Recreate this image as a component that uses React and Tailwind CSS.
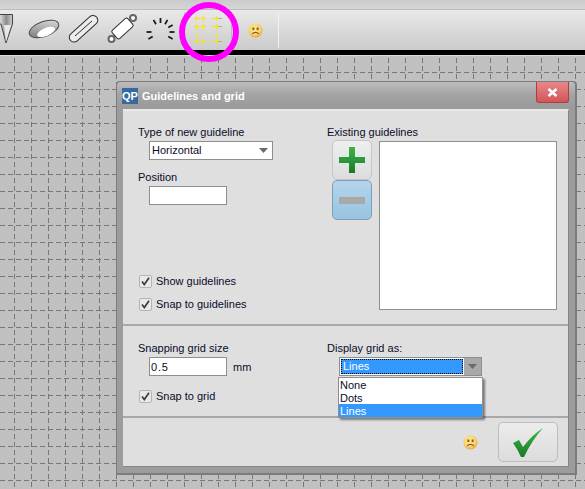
import React from "react";

function Smiley({ id, className }) {
  return (
    <svg className={className} width="15" height="15" viewBox="0 0 15 15">
      <defs>
        <radialGradient id={id} cx="45%" cy="40%" r="60%">
          <stop offset="0%" stopColor="#fdf0a0" />
          <stop offset="65%" stopColor="#f9d56d" />
          <stop offset="100%" stopColor="#eca23f" />
        </radialGradient>
      </defs>
      <circle cx="7.5" cy="7.5" r="7" fill={`url(#${id})`} />
      <rect x="4.4" y="4.5" width="2" height="2.6" fill="#8a5a2a" />
      <rect x="8.6" y="4.5" width="2" height="2.6" fill="#8a5a2a" />
      <path d="M4.2 10.8 Q7.5 8 10.8 10.8" fill="none" stroke="#8a5526" strokeWidth="1.2" />
    </svg>
  );
}

function Check({ label }) {
  return (
    <div className="flex items-center h-[14px]">
      <div className="w-[13px] h-[13px] rounded-[2px] border border-[#b4b4b4] bg-[#e9e9e9] flex items-center justify-center">
        <svg width="11" height="11" viewBox="0 0 11 11">
          <path d="M2 5.5 L4.3 8.5 L9 1.8" fill="none" stroke="#3c3c3c" strokeWidth="1.7" />
        </svg>
      </div>
      <span className="ml-[4px]">{label}</span>
    </div>
  );
}

function Arrow() {
  return (
    <svg width="9" height="5" viewBox="0 0 9 5">
      <path d="M0 0 H9 L4.5 5 Z" fill="#6a6a6a" />
    </svg>
  );
}

function Grid() {
  const xs = [];
  for (let x = 14; x < 585; x += 17) xs.push(x);
  const ys = [];
  for (let y = 16; y < 434; y += 17) ys.push(y);
  return (
    <svg className="absolute inset-0" width="585" height="434">
      {xs.map((x) => (
        <line key={x} x1={x + 0.5} y1="2" x2={x + 0.5} y2="434" stroke="#777777" strokeDasharray="5 3" />
      ))}
      {ys.map((y) => (
        <line key={y} x1="0" y1={y + 0.5} x2="585" y2={y + 0.5} stroke="#777777" strokeDasharray="5 3" />
      ))}
    </svg>
  );
}

const ticks = [-120, -90, -60, -30, 0, 30, 150, 180];

function ToolIcons() {
  return (
    <svg width="290" height="50" viewBox="0 0 290 50" className="absolute left-0 top-0">
      <defs>
        <linearGradient id="steel" x1="0" x2="1" y1="0" y2="0">
          <stop offset="0%" stopColor="#e4e4e4" />
          <stop offset="55%" stopColor="#8c8c8c" />
          <stop offset="100%" stopColor="#d0d0d0" />
        </linearGradient>
        <linearGradient id="dish" x1="0" x2="1" y1="1" y2="0">
          <stop offset="0%" stopColor="#6e6e6e" />
          <stop offset="100%" stopColor="#e6e6e6" />
        </linearGradient>
      </defs>
      <path d="M-1 14.5 H12.5 V24 L6 43 L1 24 H-1 Z" fill="url(#steel)" stroke="#444" />
      <path d="M4 25 L6 42 L11 25 Z" fill="#e8e8e8" stroke="none" />
      <ellipse cx="44" cy="29" rx="15.5" ry="7.5" transform="rotate(-20 44 29)" fill="url(#dish)" stroke="#4a4a4a" />
      <ellipse cx="46" cy="32" rx="9.5" ry="4" transform="rotate(-22 46 32)" fill="#fff" />
      <g fill="none" stroke="#2e2e2e" strokeWidth="1">
        <rect x="66" y="24" width="35" height="9.5" rx="4.7" transform="rotate(-42 83.5 28.7)" fill="#ececec" />
        <path d="M75 36 L92 21" />
      </g>
      <path d="M112.5 38 L132.5 18" stroke="#444" strokeWidth="2" />
      <rect x="112" y="23" width="21" height="11" rx="2" transform="rotate(-42 122.5 28.5)" fill="#fff" stroke="#333" />
      <circle cx="111.5" cy="39" r="3" fill="#fff" strokeWidth="2" stroke="#666" />
      <circle cx="133" cy="18" r="3" fill="#fff" strokeWidth="2" stroke="#666" />
      <g stroke="#1a1a1a" strokeWidth="1.8">
        {ticks.map((a) => {
          const r = (a * Math.PI) / 180;
          return (
            <line
              key={a}
              x1={160.5 + 9 * Math.cos(r)}
              y1={32 + 9 * Math.sin(r)}
              x2={160.5 + 14 * Math.cos(r)}
              y2={32 + 14 * Math.sin(r)}
            />
          );
        })}
      </g>
      <line x1="184.5" y1="12" x2="184.5" y2="50" stroke="#bbbbbb" />
      <line x1="231.5" y1="12" x2="231.5" y2="50" stroke="#bbbbbb" />
      <line x1="278.5" y1="13" x2="278.5" y2="48" stroke="#f2f2f2" />
      <g stroke="#ffe600" strokeWidth="1" fill="none">
        <path d="M196.5 16 V21 M203.5 16 V21 M216.5 16 V21 M196.5 24 V30 M203.5 24 V30 M216.5 24 V30 M196.5 33 V38 M216.5 33 V38 M196.5 39 V44 M203.5 39 V44 M216.5 39 V44" />
        <path d="M194 18.5 H200 M201 18.5 H206 M211 18.5 H218 M194 26.5 H200 M201 26.5 H206 M211 26.5 H218 M194 41.5 H200 M201 41.5 H206 M211 41.5 H218" />
      </g>
      <path d="M218 18.5 H222 M218 26.5 H222 M218 41.5 H222" stroke="#b5b07a" strokeWidth="1" />
    </svg>
  );
}

export default function App() {
  return (
    <div
      className="relative w-[585px] h-[489px] overflow-hidden flex flex-col bg-[#c0c0c0] text-[11px] leading-[14px] text-[#0b0b2a]"
      style={{ fontFamily: '"Liberation Sans", sans-serif' }}
    >
      <header className="relative h-[50px] shrink-0 flex flex-col">
        <div className="h-[10px] shrink-0 bg-gradient-to-b from-[#cbcbcb] to-[#d6d6d6] border-b border-[#bdbdbd]" />
        <div className="flex-1 bg-gradient-to-b from-[#e9e9e9] to-[#cbcbcb]" />
        <ToolIcons />
        <Smiley id="sm1" className="absolute left-[248px] top-[23px]" />
      </header>
      <div className="h-[5px] shrink-0 bg-black" />
      <main className="relative flex-1 border-t border-[#dadada]">
        <Grid />
        <section className="absolute left-[116px] top-[25px] w-[461px] h-[394px] rounded-t-[4px] border border-[#7c7c7c] border-r-[2px] border-b-[2px] flex flex-col bg-[#9c9c9c]">
          <div className="relative h-[27px] shrink-0 rounded-t-[4px] bg-gradient-to-b from-[#bcbcbc] via-[#a2a2a2] to-[#9a9a9a] flex items-center pl-[5px]">
            <div className="w-[16px] h-[16px] bg-[#36699d] text-white font-bold text-[11px] leading-[16px] text-center">QP</div>
            <span className="ml-[4px] text-white font-bold text-[11px]">Guidelines and grid</span>
            <div className="absolute right-[6px] top-0 w-[33px] h-[21px] rounded-b-[3px] border border-[#a94040] border-t-0 bg-gradient-to-b from-[#e8888a] to-[#d25457] flex items-center justify-center">
              <svg width="11" height="9" viewBox="0 0 11 9">
                <path d="M1.5 1 L9.5 8 M9.5 1 L1.5 8" stroke="#fff" strokeWidth="2.6" />
              </svg>
            </div>
          </div>
          <div className="mx-[6px] mb-[6px] flex-1 flex flex-col bg-[#dfdfdf] border-t-2 border-[#e8e8e8] border-r border-r-[#858585] border-b border-b-[#858585]">
            <div className="h-[215px] flex pl-[15px] pt-[14px] border-b-2 border-[#a8a8a8]">
              <div className="w-[189px] flex flex-col">
                <div>Type of new guideline</div>
                <div className="ml-[11px] mt-[2px] w-[124px] h-[19px] bg-white border border-[#8e8e8e] flex items-center justify-between pl-[2px] pr-[4px] pb-[2px]">
                  <span>Horizontal</span>
                  <span className="pt-[2px] flex"><Arrow /></span>
                </div>
                <div className="mt-[10px]">Position</div>
                <div className="ml-[11px] mt-[2px] w-[78px] h-[19px] bg-white border border-[#8e8e8e]" />
                <div className="mt-[69px] ml-[1px]"><Check label="Show guidelines" /></div>
                <div className="mt-[9px] ml-[1px]"><Check label="Snap to guidelines" /></div>
              </div>
              <div className="flex flex-col">
                <div>Existing guidelines</div>
                <div className="flex mt-[1px] ml-[5px]">
                  <div className="flex flex-col">
                    <div className="w-[40px] h-[40px] rounded-[5px] border border-[#c6c6c6] bg-gradient-to-b from-[#efefef] to-[#dcdcdc] flex items-center justify-center">
                      <svg width="26" height="26" viewBox="0 0 26 26">
                        <defs>
                          <linearGradient id="gp" x1="0" x2="0" y1="0" y2="1">
                            <stop offset="0%" stopColor="#3cb64a" />
                            <stop offset="100%" stopColor="#1a7a28" />
                          </linearGradient>
                        </defs>
                        <path d="M10 0 H16 V10 H26 V16 H16 V26 H10 V16 H0 V10 H10 Z" fill="url(#gp)" />
                      </svg>
                    </div>
                    <div className="w-[40px] h-[40px] rounded-[5px] border border-[#7f9db8] bg-gradient-to-b from-[#b4d5ec] to-[#98c4e1] flex items-center justify-center">
                      <div className="w-[26px] h-[7px] bg-[#a9a9a9]" />
                    </div>
                  </div>
                  <div className="ml-[7px] mt-[1px] w-[178px] h-[169px] bg-white border border-[#8e8e8e]" />
                </div>
              </div>
            </div>
            <div className="h-[92px] flex pl-[15px] pt-[15px] border-b-2 border-[#a8a8a8]">
              <div className="w-[189px] flex flex-col">
                <div>Snapping grid size</div>
                <div className="flex items-center ml-[11px] mt-[2px]">
                  <div className="w-[78px] h-[19px] bg-white border border-[#8e8e8e] pl-[1px] flex items-center tracking-[0.8px]">0.5</div>
                  <span className="ml-[6px]">mm</span>
                </div>
                <div className="mt-[13px] ml-[1px]"><Check label="Snap to grid" /></div>
              </div>
              <div className="flex flex-col">
                <div>Display grid as:</div>
                <div className="relative ml-[12px] mt-[2px] w-[143px] h-[19px] border border-[#8e8e8e] bg-white flex">
                  <div className="flex-1 m-[1px] bg-[#3399ff] outline-1 outline-dotted outline-black -outline-offset-1 text-white pl-[2px] pb-[2px] flex items-center">Lines</div>
                  <div className="w-[17px] bg-[#a9a9a9] flex items-center justify-center"><Arrow /></div>
                  <div className="absolute left-[-2px] top-[19px] w-[145px] h-[41px] bg-white border border-[#8e8e8e] shadow-[2px_2px_2px_rgba(0,0,0,0.45)] text-[#0b0b2a] flex flex-col">
                    <div className="pl-[1px] h-[13px] leading-[15px]">None</div>
                    <div className="pl-[1px] h-[13px] leading-[15px]">Dots</div>
                    <div className="pl-[1px] h-[13px] leading-[15px] bg-[#3399ff] text-white">Lines</div>
                  </div>
                </div>
              </div>
            </div>
            <div className="flex-1 flex items-center justify-end pr-[10px] bg-[#dfdfdf]">
              <Smiley id="sm2" className="" />
              <div className="ml-[20px] w-[60px] h-[40px] rounded-[5px] border border-[#bdbdbd] bg-gradient-to-b from-[#ececec] to-[#dcdcdc] flex items-center justify-center">
                <svg width="32" height="32" viewBox="0 0 32 32">
                  <defs>
                    <linearGradient id="ck" x1="0" x2="0" y1="0" y2="1">
                      <stop offset="0%" stopColor="#3cb84a" />
                      <stop offset="100%" stopColor="#1c7a24" />
                    </linearGradient>
                  </defs>
                  <path d="M1 17 L7 14 L11 21 Q20 9 31 2 Q20 14 12 31 H9 Q6 24 1 17 Z" fill="url(#ck)" />
                </svg>
              </div>
            </div>
          </div>
        </section>
      </main>
      <div className="absolute left-[179px] top-[2px] w-[60px] h-[60px] rounded-full border-[6px] border-[#ff00ff]" />
    </div>
  );
}
